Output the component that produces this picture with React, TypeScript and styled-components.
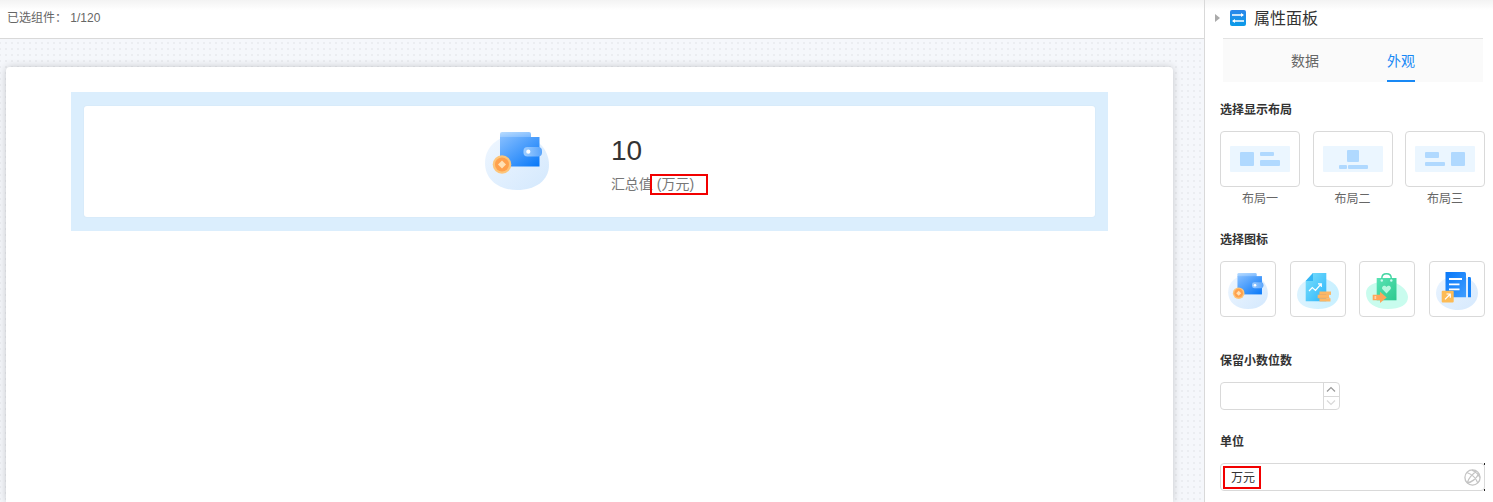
import React, { useState } from "react";
import styled, { createGlobalStyle } from "styled-components";

const GlobalStyle = createGlobalStyle`
  *, *::before, *::after { box-sizing: border-box; }
  body {
    margin: 0;
    background: #fff;
    color: #333;
    font-family: "Liberation Sans", "Noto Sans CJK SC", sans-serif;
    font-size: 12px;
    line-height: 20px;
  }
  button, input { font: inherit; color: inherit; }
  button { padding: 0; border: 0; background: none; cursor: pointer; }
`;

const Shell = styled.div`
  display: flex;
  min-height: 100vh;
  background: linear-gradient(#f3f3f3, #fff 10px);
`;

const Workspace = styled.main`
  flex: 1;
  min-width: 0;
  display: flex;
  flex-direction: column;
`;

const StatusBar = styled.header`
  height: 39px;
  padding: 8px 7px 0;
  border-bottom: 1px solid #d9d9d9;
  color: #666;
`;

const Canvas = styled.div`
  flex: 1;
  display: flex;
  padding: 28px 31px 0 6px;
  overflow: hidden;
  background-color: #f5f7fb;
  background-image: conic-gradient(from 270deg at 2px 2px, #ebedf1 25%, transparent 0);
  background-size: 6px 6px;
  background-position: 5px 3px;
`;

const Sheet = styled.section`
  flex: 1;
  padding: 25px 65px 0;
  background: #fff;
  border-radius: 4px 4px 0 0;
  box-shadow: 0 0 8px rgba(0, 0, 0, 0.2);
`;

const Selection = styled.div`
  padding: 14px 13px;
  background: #dbeefd;
`;

const StatCard = styled.article`
  display: flex;
  align-items: center;
  justify-content: center;
  gap: 62px;
  height: 111px;
  padding-bottom: 2px;
  background: #fff;
  border-radius: 3px;
  box-shadow: 0 0 2px rgba(0, 0, 0, 0.06);
`;

const StatText = styled.div`
  display: flex;
  flex-direction: column;
  gap: 5px;
  padding-top: 5px;
`;

const StatValue = styled.strong`
  font-size: 28px;
  font-weight: 400;
  line-height: 36px;
`;

const StatLabel = styled.span`
  font-size: 14px;
  line-height: 20px;
  color: #777;
  white-space: pre;
`;

const Marked = styled.span`
  position: relative;
`;

const Marker = styled.span<{ $inset: string }>`
  position: absolute;
  inset: ${(p) => p.$inset};
  border: 2px solid #f20000;
  pointer-events: none;
`;

const Panel = styled.aside`
  width: 289px;
  flex: none;
  border-left: 1px solid #d9d9d9;
`;

const PanelHeader = styled.header`
  display: flex;
  align-items: center;
  height: 38px;
  padding: 0 0 2px 10px;
`;

const Collapse = styled.button`
  display: flex;
  width: 15px;
`;

const PanelTitle = styled.h2`
  margin: 0 0 0 8px;
  padding-top: 2px;
  font-size: 16px;
  font-weight: 400;
  line-height: 24px;
`;

const Tabs = styled.div`
  display: flex;
  justify-content: center;
  gap: 68px;
  height: 44px;
  margin: 0 10px 0 18px;
  border-top: 1px solid #e3e3e3;
  background: #fafafa;
`;

const Tab = styled.button<{ $active: boolean }>`
  height: 43px;
  padding-top: 2px;
  border-bottom: 2px solid ${(p) => (p.$active ? "#1989f5" : "transparent")};
  color: ${(p) => (p.$active ? "#1989f5" : "#666")};
  font-size: 14px;
`;

const PanelBody = styled.div`
  padding: 18px 8px 11px 15px;
`;

const Section = styled.section<{ $after?: number }>`
  margin-bottom: ${(p) => p.$after ?? 0}px;
`;

const Heading = styled.h3`
  margin: 0 0 11px;
  font-size: 12px;
  font-weight: 700;
  line-height: 20px;
`;

const FieldLabel = styled.label`
  display: block;
  margin-bottom: 11px;
  font-weight: 700;
`;

const Row = styled.div`
  display: flex;
  justify-content: space-between;
`;

const LayoutOption = styled.button`
  display: flex;
  flex-direction: column;
  width: 80px;
  color: #666;
  line-height: 24px;
  text-align: center;
`;

const LayoutFrame = styled.span`
  display: flex;
  align-items: center;
  justify-content: center;
  height: 56px;
  border: 1px solid #d9d9d9;
  border-radius: 4px;
  background: #fff;
`;

const IconOption = styled.button`
  display: flex;
  align-items: center;
  justify-content: center;
  width: 56px;
  height: 56px;
  padding-top: 4px;
  border: 1px solid #d9d9d9;
  border-radius: 4px;
  background: #fff;
`;

const NumberBox = styled.div`
  display: flex;
  width: 120px;
  height: 28px;
  border: 1px solid #d9d9d9;
  border-radius: 4px;
`;

const PlainInput = styled.input`
  flex: 1;
  min-width: 0;
  padding: 2px 10px 0;
  border: 0;
  outline: 0;
  background: transparent;
`;

const Steps = styled.div`
  display: flex;
  flex-direction: column;
  width: 16px;
  border-left: 1px solid #d9d9d9;
`;

const Step = styled.button<{ $muted?: boolean }>`
  flex: 1;
  display: flex;
  align-items: center;
  justify-content: center;
  color: ${(p) => (p.$muted ? "#d9d9d9" : "#999")};
  & + & { border-top: 1px solid #d9d9d9; }
`;

const UnitBox = styled.div`
  position: relative;
  display: flex;
  align-items: center;
  height: 28px;
  padding-right: 3px;
  border: 1px solid #d9d9d9;
  border-radius: 4px;
`;

const CornerTick = styled.span<{ $bottom?: boolean }>`
  position: absolute;
  right: -1px;
  ${(p) => (p.$bottom ? "bottom: -1px;" : "top: -1px;")}
  width: 1px;
  height: 2px;
  background: #222;
`;

const LanguageButton = styled.button`
  display: flex;
`;

function Wallet({ id, width, height }: { id: string; width: number; height: number }) {
  return (
    <svg width={width} height={height} viewBox="0 0 64 58" aria-hidden="true">
      <defs>
        <linearGradient id={`${id}-blob`} x1="0" y1="0" x2="1" y2="1">
          <stop offset="0" stopColor="#f0f7ff" />
          <stop offset="1" stopColor="#d3e8fd" />
        </linearGradient>
        <linearGradient id={`${id}-body`} x1="0" y1="0" x2="1" y2="1">
          <stop offset="0" stopColor="#85beff" />
          <stop offset="1" stopColor="#0878f8" />
        </linearGradient>
        <linearGradient id={`${id}-back`} x1="0" y1="0" x2="1" y2="1">
          <stop offset="0" stopColor="#b9dcff" />
          <stop offset="1" stopColor="#74b5ff" />
        </linearGradient>
        <linearGradient id={`${id}-clasp`} x1="0" y1="0" x2="1" y2="0">
          <stop offset="0" stopColor="#9fceff" />
          <stop offset="1" stopColor="#5ba5fb" />
        </linearGradient>
      </defs>
      <path d="M32 3C50 3 64 16 64 33C64 48 51 58 32 58C13 58 0 47 0 31C0 15 13 3 32 3Z" fill={`url(#${id}-blob)`} />
      <path d="M15 6V2Q15 0 17 0H44Q46 0 46 2V6Z" fill={`url(#${id}-back)`} />
      <path d="M15 5H54.500V34.500H15Z" fill={`url(#${id}-body)`} />
      <rect x="38.500" y="15" width="18.500" height="9.500" rx="4" fill={`url(#${id}-clasp)`} />
      <circle cx="43.300" cy="19.700" r="2.100" fill="#fff" />
      <circle cx="17" cy="32.500" r="9.300" fill="#fdc57a" />
      <circle cx="17" cy="32.500" r="7" fill="#ffa14d" />
      <path d="M17 28.500L21 32.500L17 36.500L13 32.500Z" fill="#ffe1b5" />
    </svg>
  );
}

function ReportIcon() {
  return (
    <svg width="42" height="38" viewBox="0 0 42 38" aria-hidden="true">
      <defs>
        <linearGradient id="report-page" x1="0" y1="0" x2="1" y2="1">
          <stop offset="0" stopColor="#7ee0fb" />
          <stop offset="1" stopColor="#2bb5fb" />
        </linearGradient>
        <linearGradient id="report-blob" x1="0" y1="0" x2="1" y2="0">
          <stop offset="0" stopColor="#dcf3ff" />
          <stop offset="1" stopColor="#c8f0ff" />
        </linearGradient>
      </defs>
      <path d="M21 6C33 6 42 13 42 22C42 31 33 37 21 37C9 37 0 32 0 23C0 13 9 6 21 6Z" fill="url(#report-blob)" />
      <path d="M16 1H29.300V29.300H8.700V9Z" fill="url(#report-page)" />
      <path d="M16 1V9H8.700Z" fill="#35b6f5" />
      <path d="M12 19L15.300 15.500L18.500 18.500L24 12M21 11.800H24.300V15" fill="none" stroke="#fff" strokeWidth="1.200" />
      <path d="M22.500 19.500H34V22.500H22.500ZM20.700 22.800H32V26H20.700ZM22.500 26.300H33.500V29.500H22.500Z" fill="#fdb765" />
      <path d="M22.500 22.500H34M20.700 26H33" stroke="#fbaa58" strokeWidth="0.600" />
    </svg>
  );
}

function BagIcon() {
  return (
    <svg width="42" height="38" viewBox="0 0 42 38" aria-hidden="true">
      <defs>
        <linearGradient id="bag-body" x1="0" y1="0" x2="1" y2="1">
          <stop offset="0" stopColor="#58e3b4" />
          <stop offset="1" stopColor="#2dc98f" />
        </linearGradient>
      </defs>
      <path d="M19 9C27 8 42 15 42 25C42 33 34 37 22 37C9 37 0 31 0 21C0 13 9 10 19 9Z" fill="#c9fcee" />
      <path d="M10.700 6H30.500V28.300H10.700Z" fill="url(#bag-body)" />
      <path d="M15.800 9V6.500Q15.800 1.800 20.500 1.800Q25.300 1.800 25.300 6.500V9" fill="none" stroke="#42d5a2" strokeWidth="1.400" />
      <circle cx="15.800" cy="8.500" r="1.200" fill="#c9fcee" />
      <circle cx="25.300" cy="8.500" r="1.200" fill="#c9fcee" />
      <path d="M20.500 21.500L16.500 17.300C14.800 14.800 18.500 12 20.500 15C22.500 12 26.200 14.800 24.500 17.300Z" fill="#b6f8df" />
      <path d="M6.700 22.700H14V19.800L20.700 25.400L14 31V28.300H6.700Z" fill="#ffa65a" />
      <path d="M8.500 24H10.200V27H8.500Z" fill="#ffd3a8" />
    </svg>
  );
}

function DocumentIcon() {
  return (
    <svg width="42" height="38" viewBox="0 0 42 38" aria-hidden="true">
      <defs>
        <linearGradient id="doc-page" x1="0" y1="0" x2="1" y2="1">
          <stop offset="0" stopColor="#0878f8" />
          <stop offset="1" stopColor="#3f9dff" />
        </linearGradient>
        <linearGradient id="doc-blob" x1="0" y1="0" x2="1" y2="1">
          <stop offset="0" stopColor="#eaf4ff" />
          <stop offset="1" stopColor="#d6e9fd" />
        </linearGradient>
      </defs>
      <path d="M21 4C33 4 42 11 42 21C42 31 33 38 22 38C10 38 0 31 0 21C0 11 9 4 21 4Z" fill="url(#doc-blob)" />
      <path d="M9.500 0H28.500Q30 0 30 2V25.300H9.500Z" fill="url(#doc-page)" />
      <path d="M32 5H34Q35 5 35 6.500V25.300H32Z" fill="#1583fb" />
      <path d="M13 7H26M13 12.300H23.500M13 17.400H23.500" stroke="#fff" strokeWidth="1.800" />
      <rect x="5.700" y="18.700" width="12" height="11.800" rx="1" fill="#fdbb55" />
      <path d="M9 27.300L14.300 22M10.500 22H14.300V25.800" fill="none" stroke="#fff" strokeWidth="1.200" />
    </svg>
  );
}

// Each entry is x, y, width, height of one block in the 60x26 preview.
const layouts = [
  { name: "布局一", blocks: [[10, 6, 14, 14], [30, 6, 14, 4], [30, 14, 20, 6]] },
  { name: "布局二", blocks: [[24, 4, 12, 12], [16, 19, 8, 4], [25, 19, 20, 4]] },
  { name: "布局三", blocks: [[10, 6, 14, 6], [10, 16, 20, 4], [36, 6, 14, 14]] },
];

const icons = [
  { name: "钱包", art: <Wallet id="wallet-small" width={40} height={36} /> },
  { name: "报表", art: <ReportIcon /> },
  { name: "购物袋", art: <BagIcon /> },
  { name: "文档", art: <DocumentIcon /> },
];

export default function App() {
  const [tab, setTab] = useState("外观");
  const [digits, setDigits] = useState("");
  const [unit, setUnit] = useState("万元");

  const step = (by: number) => setDigits(String(Math.max(0, Number(digits || 0) + by)));

  return (
    <Shell>
      <GlobalStyle />
      <Workspace>
        <StatusBar>已选组件： 1/120</StatusBar>
        <Canvas>
          <Sheet>
            <Selection>
              <StatCard>
                <Wallet id="wallet-large" width={64} height={58} />
                <StatText>
                  <StatValue>10</StatValue>
                  <StatLabel>
                    汇总值{" "}
                    <Marked>
                      ({unit})
                      <Marker $inset="-2px -14px -3px -7px" />
                    </Marked>
                  </StatLabel>
                </StatText>
              </StatCard>
            </Selection>
          </Sheet>
        </Canvas>
      </Workspace>

      <Panel>
        <PanelHeader>
          <Collapse aria-label="收起面板">
            <svg width="5" height="8" viewBox="0 0 5 8" aria-hidden="true">
              <path d="M0 0L5 4L0 8Z" fill="#aaa" />
            </svg>
          </Collapse>
          <svg width="16" height="16" viewBox="0 0 16 16" aria-hidden="true">
            <defs>
              <linearGradient id="panel-mark" x1="0" y1="0" x2="0" y2="1">
                <stop offset="0" stopColor="#2b86ea" />
                <stop offset="1" stopColor="#0a9be8" />
              </linearGradient>
            </defs>
            <rect width="16" height="16" rx="2" fill="url(#panel-mark)" />
            <path d="M2 5H13M3 11H14" stroke="#fff" strokeWidth="1.400" />
            <path d="M11 3L14 5L11 7ZM5 9L2 11L5 13Z" fill="#fff" />
          </svg>
          <PanelTitle>属性面板</PanelTitle>
        </PanelHeader>

        <Tabs role="tablist">
          {["数据", "外观"].map((name) => (
            <Tab key={name} role="tab" aria-selected={tab === name} $active={tab === name} onClick={() => setTab(name)}>
              {name}
            </Tab>
          ))}
        </Tabs>

        <PanelBody>
          <Section $after={19}>
            <Heading>选择显示布局</Heading>
            <Row>
              {layouts.map(({ name, blocks }) => (
                <LayoutOption key={name}>
                  <LayoutFrame>
                    <svg width="60" height="26" viewBox="0 0 60 26" aria-hidden="true">
                      <rect width="60" height="26" rx="1" fill="#ebf6ff" />
                      {blocks.map(([x, y, w, h]) => (
                        <rect key={`${x}-${y}`} x={x} y={y} width={w} height={h} rx="1" fill="#b0d9ff" />
                      ))}
                    </svg>
                  </LayoutFrame>
                  {name}
                </LayoutOption>
              ))}
            </Row>
          </Section>

          <Section $after={34}>
            <Heading>选择图标</Heading>
            <Row>
              {icons.map(({ name, art }) => (
                <IconOption key={name} aria-label={name}>
                  {art}
                </IconOption>
              ))}
            </Row>
          </Section>

          <Section $after={22}>
            <FieldLabel htmlFor="digits">保留小数位数</FieldLabel>
            <NumberBox>
              <PlainInput id="digits" inputMode="numeric" value={digits} onChange={(e) => setDigits(e.target.value)} />
              <Steps>
                <Step aria-label="增加" onClick={() => step(1)}>
                  <svg width="11" height="6" viewBox="0 0 11 6" aria-hidden="true">
                    <path d="M1 5.500L5 1.500L9 5.500" fill="none" stroke="currentColor" strokeWidth="1.200" />
                  </svg>
                </Step>
                <Step aria-label="减少" $muted onClick={() => step(-1)}>
                  <svg width="11" height="6" viewBox="0 0 11 6" aria-hidden="true">
                    <path d="M1 0.500L5 4.500L9 0.500" fill="none" stroke="currentColor" strokeWidth="1.200" />
                  </svg>
                </Step>
              </Steps>
            </NumberBox>
          </Section>

          <Section>
            <FieldLabel htmlFor="unit">单位</FieldLabel>
            <UnitBox>
              <PlainInput id="unit" value={unit} onChange={(e) => setUnit(e.target.value)} />
              <Marker $inset="2px 223px 1px 2px" />
              <LanguageButton aria-label="多语言">
                <svg width="17" height="17" viewBox="0 0 17 17" fill="none" stroke="#c4c4c4" strokeWidth="1.300" aria-hidden="true">
                  <circle cx="8.500" cy="8.500" r="7.600" />
                  <path d="M2.800 3.500C7.500 5 12 9.500 13.800 14M3.200 14C4.500 9.500 8.500 5 12.500 2.300M8 1.200C11.500 2.500 14.500 5.500 15.900 8.500M3.200 14C7 13.500 12.500 10 14.800 4.500" />
                </svg>
              </LanguageButton>
              <CornerTick />
              <CornerTick $bottom />
            </UnitBox>
          </Section>
        </PanelBody>
      </Panel>
    </Shell>
  );
}
